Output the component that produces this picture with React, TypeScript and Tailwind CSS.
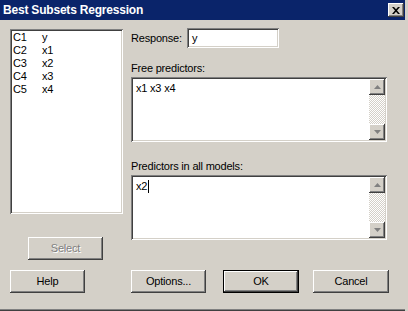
const font = "font-['Liberation_Sans',Arial,sans-serif]"

const raised =
  "bg-[#d4d0c8] shadow-[inset_-1px_-1px_0_#404040,inset_1px_1px_0_#ffffff,inset_-2px_-2px_0_#808080]"
const sunken =
  "bg-white shadow-[inset_1px_1px_0_#808080,inset_-1px_-1px_0_#ffffff,inset_2px_2px_0_#404040,inset_-2px_-2px_0_#d4d0c8]"

const columns = [
  ["C1", "y"],
  ["C2", "x1"],
  ["C3", "x2"],
  ["C4", "x3"],
  ["C5", "x4"],
]

function Arrow({ up }: { up?: boolean }) {
  return (
    <div className={`w-[16px] h-[16px] flex items-center justify-center ${raised}`}>
      <svg width="7" height="4" viewBox="0 0 7 4">
        {up ? (
          <polygon points="3.5,0 7,4 0,4" fill="#808080" />
        ) : (
          <polygon points="0,0 7,0 3.5,4" fill="#808080" />
        )}
      </svg>
    </div>
  )
}

function TextBox({ children }: { children?: React.ReactNode }) {
  return (
    <div className={`w-[256px] h-[65px] flex p-[2px] ${sunken}`}>
      <div className="flex-1 pl-[3px] pt-[3px] leading-[13px]">{children}</div>
      <div className="w-[16px] flex flex-col">
        <Arrow up />
        <div className="flex-1 bg-[image:repeating-conic-gradient(#d4d0c8_0_25%,#ffffff_0_50%)] bg-[length:2px_2px]" />
        <Arrow />
      </div>
    </div>
  )
}

function Button({ label, wide, isDefault, disabled }: { label: string; wide?: boolean; isDefault?: boolean; disabled?: boolean }) {
  return (
    <div
      className={`h-[23px] ${wide ? "w-[76px]" : "w-[75px]"} flex items-center justify-center ${
        isDefault
          ? "bg-[#d4d0c8] border border-black shadow-[inset_-1px_-1px_0_#404040,inset_1px_1px_0_#ffffff,inset_-2px_-2px_0_#808080]"
          : raised
      } ${disabled ? "text-[#808080] [text-shadow:1px_1px_0_#ffffff]" : "text-black"}`}
    >
      {label}
    </div>
  )
}

export default function App() {
  return (
    <div
      className={`w-[408px] h-[311px] bg-[#d4d0c8] pr-[3px] pb-[2px] flex flex-col text-[11px] tracking-[-0.2px] text-black ${font} shadow-[inset_-3px_0_0_#d4d0c8,inset_-1px_-1px_0_#404040,inset_-2px_-2px_0_#808080]`}
    >
      <div className="h-[20px] bg-[#0a246a] flex items-center pl-[3px] pr-[1px]">
        <span className="text-white font-bold text-[12px] tracking-[-0.2px] flex-1">Best Subsets Regression</span>
        <div className={`w-[16px] h-[14px] flex items-center justify-center ${raised}`}>
          <svg width="8" height="7" viewBox="0 0 8 7">
            <path d="M0 0h2l2 2.2L6 0h2L5 3.5 8 7H6L4 4.8 2 7H0l3-3.5z" fill="#000" />
          </svg>
        </div>
      </div>

      <div className="flex pl-[10px]">
        <div className="flex flex-col mt-[9px]">
          <div className={`w-[113px] h-[185px] pl-[3px] pt-[2px] ${sunken}`}>
            {columns.map(([c, name]) => (
              <div key={c} className="flex leading-[13px] h-[13px]">
                <span className="w-[29px]">{c}</span>
                <span>{name}</span>
              </div>
            ))}
          </div>
          <div className="mt-[23px] ml-[18px]">
            <Button label="Select" disabled />
          </div>
        </div>

        <div className="flex flex-col ml-[8px] mt-[8px]">
          <div className="flex items-center">
            <span className="w-[56px]">Response:</span>
            <div className={`w-[92px] h-[20px] pl-[5px] flex items-center ${sunken}`}>y</div>
          </div>
          <div className="mt-[14px] leading-[13px]">Free predictors:</div>
          <div className="mt-[2px]">
            <TextBox>x1 x3 x4</TextBox>
          </div>
          <div className="mt-[18px] leading-[13px]">Predictors in all models:</div>
          <div className="mt-[2px]">
            <TextBox>
              <span className="inline-flex items-center">
                x2
                <span className="inline-block w-[1px] h-[13px] bg-black ml-[1px]" />
              </span>
            </TextBox>
          </div>
        </div>
      </div>

      <div className="flex pl-[10px] mt-[10px]">
        <Button label="Help" />
        <div className="ml-[46px]">
          <Button label="Options..." />
        </div>
        <div className="ml-[17px]">
          <Button label="OK" wide isDefault />
        </div>
        <div className="ml-[14px]">
          <Button label="Cancel" wide />
        </div>
      </div>
    </div>
  )
}
